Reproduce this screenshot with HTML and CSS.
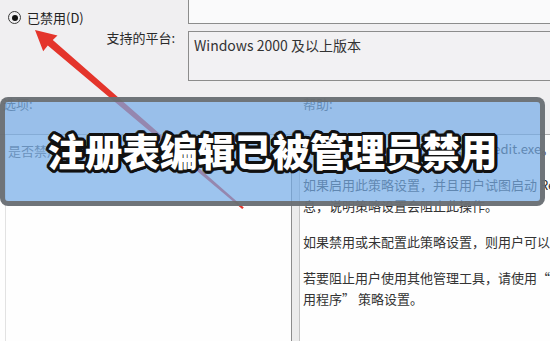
FILE: index.html
```html
<!DOCTYPE html>
<html lang="zh-CN">
<head>
<meta charset="utf-8">
<title>注册表编辑已被管理员禁用</title>
<link rel="stylesheet" href="styles.css">
</head>
<body>
<div class="dialog">
  <div class="top">
    <div class="radio-row">
      <span class="radio"><span class="dot"></span></span>
      <span class="radio-label">已禁用(D)</span>
    </div>
    <div class="comment-box"></div>
    <div class="platform-label">支持的平台:</div>
    <div class="platform-box">Windows 2000 及以上版本</div>
  </div>
  <div class="labels">
    <div class="lbl-options">选项:</div>
    <div class="lbl-help">帮助:</div>
  </div>
  <div class="panels">
    <div class="options">
      <div class="opt-body">是否禁用无提示运行 regedit?</div>
    </div>
    <div class="help">
      <div class="help-frame">
        <div class="help-text">
          <p>禁用 Windows 注册表编辑器 Regedit.exe。</p>
          <p>如果启用此策略设置，并且用户试图启动 Regedit.exe，则会出现一条消<br>息，说明策略设置会阻止此操作。</p>
          <p>如果禁用或未配置此策略设置，则用户可以正常运行 Regedit.exe。</p>
          <p>若要阻止用户使用其他管理工具，请使用“只运行指定的 Windows 应<br>用程序” 策略设置。</p>
        </div>
      </div>
    </div>
  </div>
</div>
<svg class="arrow" width="550" height="341" viewBox="0 0 550 341">
  <polygon points="35,30 57.5,35.4 52.8,40.1 243.8,207.5 242.2,209 47.8,45.6 43.2,51.2" fill="#e4352c"/>
</svg>
<div class="banner"><span class="title">注册表编辑已被管理员禁用</span></div>
</body>
</html>
```
FILE: styles.css
```css
html, body {
  margin: 0;
  padding: 0;
}
body {
  width: 550px;
  height: 341px;
  overflow: hidden;
  position: relative;
  background: #f0eff1;
  font-family: "Noto Sans CJK SC", "Noto Sans", sans-serif;
  font-size: 13px;
  color: #333;
}
.dialog {
  display: flex;
  flex-direction: column;
  height: 341px;
}
.top {
  display: grid;
  grid-template-columns: 188px 1fr;
}
.radio-row {
  height: 24px;
  box-sizing: border-box;
  padding: 11px 0 0 8px;
  display: flex;
  align-items: center;
  gap: 6px;
  line-height: 14px;
  color: #222;
}
.radio {
  width: 13px;
  height: 13px;
  box-sizing: border-box;
  border: 1.5px solid #3a3a3a;
  border-radius: 50%;
  display: grid;
  place-items: center;
}
.dot {
  width: 6px;
  height: 6px;
  border-radius: 50%;
  background: #111;
}
.comment-box {
  height: 24px;
  box-sizing: border-box;
  border-left: 1px solid #8c8c8c;
  border-bottom: 1px solid #8c8c8c;
  background: #fafafb;
}
.platform-label {
  padding: 7px 13px 0 0;
  text-align: right;
  line-height: 14px;
  color: #2a2a2a;
}
.platform-box {
  margin-top: 7px;
  height: 50px;
  box-sizing: border-box;
  border: 1px solid #8c8c8c;
  border-right: none;
  background: #f2f1f3;
  padding: 3px 0 0 5px;
  font-size: 14px;
  line-height: 20px;
  color: #333;
}
.labels {
  display: grid;
  grid-template-columns: 303px 1fr;
  margin-top: 16px;
  line-height: 14px;
  color: #444;
}
.lbl-options {
  padding-left: 3px;
}
.panels {
  display: grid;
  grid-template-columns: 291px 1fr;
  margin-top: 23px;
  flex: 1;
}
.options {
  border-top: 1px solid #b0b0b0;
  background: #fefefe;
}
.opt-body {
  margin-left: 5px;
  height: 100%;
  box-sizing: border-box;
  border-left: 1px solid #e2e2e2;
  padding: 6px 0 0 2px;
  line-height: 20px;
  white-space: nowrap;
  overflow: hidden;
  color: #555;
}
.help {
  border-top: 1px solid #b0b0b0;
  border-left: 1px solid #8c8c8c;
  background: #fefefe;
  overflow: hidden;
}
.help-frame {
  height: 100%;
  border-left: 7px solid #ececec;
}
.help-text {
  height: 100%;
  box-sizing: border-box;
  border-left: 1px solid #c4c4c4;
  padding: 3px 0 0 3px;
  line-height: 21px;
  white-space: nowrap;
  color: #333;
}
.help-text p {
  margin: 0 0 15px;
}
.arrow {
  position: absolute;
  left: 0;
  top: 0;
  z-index: 1;
}
.banner {
  position: absolute;
  left: 0;
  top: 97px;
  width: 545px;
  height: 109px;
  box-sizing: border-box;
  border: 5px solid rgba(105, 105, 105, 0.88);
  border-radius: 8px;
  background: rgba(116, 171, 231, 0.7);
  z-index: 2;
  display: flex;
  align-items: center;
  justify-content: center;
}
.title {
  font-size: 37.5px;
  font-weight: 900;
  line-height: 44px;
  color: #fff;
  margin-top: -4px;
  white-space: nowrap;
  text-shadow:
    3px 0 0 #111, -3px 0 0 #111, 0 3px 0 #111, 0 -3px 0 #111,
    2px 2px 0 #111, -2px 2px 0 #111, 2px -2px 0 #111, -2px -2px 0 #111,
    3px 1px 0 #111, -3px 1px 0 #111, 3px -1px 0 #111, -3px -1px 0 #111,
    1px 3px 0 #111, -1px 3px 0 #111, 1px -3px 0 #111, -1px -3px 0 #111;
}
```
